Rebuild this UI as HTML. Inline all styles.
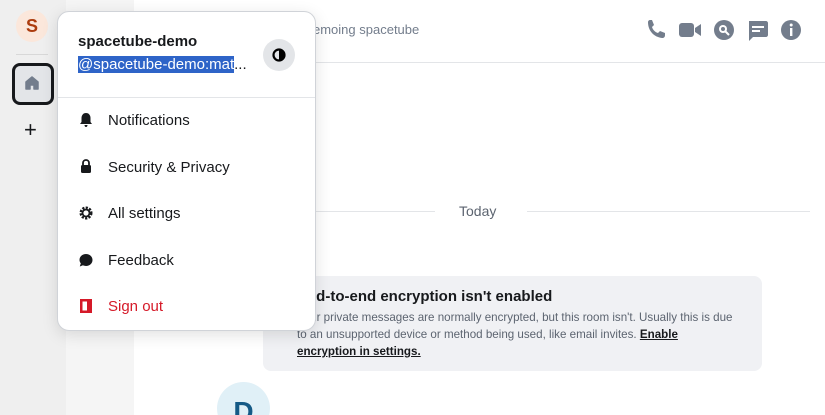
<!DOCTYPE html><html style="overflow:hidden;height:415px"><head><style>
body{margin:0;width:825px;height:415px;overflow:hidden;font-family:"Liberation Sans",sans-serif;background:#fff;position:relative}
.a{position:absolute}
</style></head><body>
<div class="a" style="left:0;top:0;width:66px;height:415px;background:#efefef"></div>
<div class="a" style="left:66px;top:0;width:68px;height:415px;background:#f5f5f5"></div>
<div class="a" style="left:16px;top:10px;width:32px;height:32px;border-radius:50%;background:#fbe7db;color:#ac3c0e;font-weight:bold;font-size:18px;text-align:center;line-height:32px">S</div>
<div class="a" style="left:16px;top:54px;width:32px;height:1px;background:#d8d8d8"></div>
<div class="a" style="left:12px;top:63px;width:36px;height:36px;border:3px solid #17191c;border-radius:8px;background:#e3e5e8"></div>
<svg class="a" style="left:22px;top:73px" width="20" height="20" viewBox="0 0 20 20"><path d="M4 9 L10 4 L16 9 V16 H12 V12 H8 V16 H4Z" fill="#737d8c" stroke="#737d8c" stroke-linejoin="round" stroke-width="1.5"/></svg>
<div class="a" style="left:24px;top:117px;font-size:22px;color:#17191c;line-height:26px">+</div>
<div class="a" style="left:134px;top:62px;width:691px;height:1px;background:#e3e5e8"></div>
<div class="a" style="left:313px;top:22px;font-size:13px;color:#737d8c">emoing spacetube</div>
<svg class="a" style="left:645px;top:19px" width="160" height="24" viewBox="0 0 160 24" fill="#737d8c">
<path d="M3 3 C3 2 4 1 5 1 L7 1 L9 6 L7 8 C8 11 10 13 13 14 L15 12 L20 14 V16 C20 18 19 19 17 19 C9 18 3 12 3 3Z"/>
<rect x="34" y="4" width="15" height="14" rx="3"/><path d="M50 9 L56 5 V17 L50 13Z"/>
<circle cx="79" cy="11" r="10"/><circle cx="78" cy="10" r="4" fill="#fff"/><circle cx="78" cy="10" r="2" fill="#737d8c"/><path d="M80 12 L84 16" stroke="#fff" stroke-width="2"/>
<path d="M104 2 H121 C122 2 123 3 123 4 V16 C123 17 122 18 121 18 H108 L104 22Z"/><rect x="107" y="7" width="12" height="2" fill="#fff"/><rect x="107" y="11" width="8" height="2" fill="#fff"/>
<circle cx="146" cy="11" r="10"/><rect x="145" y="9" width="2.4" height="8" fill="#fff"/><circle cx="146.2" cy="6" r="1.5" fill="#fff"/>
</svg>
<div class="a" style="left:315px;top:211px;width:120px;height:1px;background:#e3e5e8"></div>
<div class="a" style="left:527px;top:211px;width:283px;height:1px;background:#e3e5e8"></div>
<div class="a" style="left:459px;top:203px;font-size:14px;color:#5c6470">Today</div>
<div class="a" style="left:263px;top:276px;width:499px;height:95px;background:#f0f1f4;border-radius:8px"></div>
<div class="a" style="left:297px;top:288px;font-size:15px;font-weight:bold;color:#17191c">End-to-end encryption isn't enabled</div>
<div class="a" style="left:297px;top:309px;width:440px;font-size:11.6px;line-height:17px;color:#5c6470">Your private messages are normally encrypted, but this room isn't. Usually this is due to an unsupported device or method being used, like email invites. <b style="color:#17191c;text-decoration:underline">Enable encryption in settings.</b></div>
<div class="a" style="left:217px;top:382px;width:53px;height:33px;overflow:hidden"><div style="width:53px;height:53px;border-radius:50%;background:#e0f0f7;color:#155a86;font-weight:bold;font-size:28px;text-align:center;line-height:60px">D</div></div>
<div class="a" style="left:57px;top:11px;width:257px;height:318px;background:#fff;border:1px solid #d0d3d8;border-radius:12px;box-shadow:0 4px 16px rgba(0,0,0,.12)">
<div class="a" style="left:20px;top:21px;font-size:15px;font-weight:bold;color:#17191c">spacetube-demo</div>
<div class="a" style="left:20px;top:43px;font-size:15px;line-height:20px;white-space:nowrap"><span style="color:#fff;background:#2e64c8">@spacetube-demo:mat</span><span style="color:#17191c">...</span></div>
<div class="a" style="left:205px;top:27px;width:32px;height:32px;border-radius:50%;background:#e3e5e8"></div>
<svg class="a" style="left:214px;top:36px" width="14" height="14" viewBox="0 0 14 14"><circle cx="7" cy="7" r="5.5" fill="none" stroke="#000" stroke-width="2.2"/><path d="M7 1.5 A5.5 5.5 0 0 1 7 12.5Z" fill="#000"/></svg>
<div class="a" style="left:0;top:85px;width:257px;height:1px;background:#e3e5e8"></div>
<div class="a" style="left:50px;top:99px;font-size:15px;color:#17191c;line-height:20px">Notifications</div>
<div class="a" style="left:50px;top:146px;font-size:15px;color:#17191c;line-height:20px">Security &amp; Privacy</div>
<div class="a" style="left:50px;top:192px;font-size:15px;color:#17191c;line-height:20px">All settings</div>
<div class="a" style="left:50px;top:239px;font-size:15px;color:#17191c;line-height:20px">Feedback</div>
<div class="a" style="left:50px;top:285px;font-size:15px;color:#d51928;line-height:20px">Sign out</div>
<svg class="a" style="left:20px;top:100px" width="16" height="210" viewBox="0 0 16 210" fill="#17191c">
<path d="M8 1 C5 1 3.5 3.5 3.5 6 V10 L2 12 H14 L12.5 10 V6 C12.5 3.5 11 1 8 1Z M6.5 13 H9.5 C9.5 14 9 15 8 15 C7 15 6.5 14 6.5 13Z"/>
<rect x="3" y="53" width="10" height="8" rx="1.5"/><path d="M5 53 V51 C5 47 11 47 11 51 V53" fill="none" stroke="#17191c" stroke-width="1.8"/>
<circle cx="8" cy="101" r="5.3" fill="none" stroke="#17191c" stroke-width="2.4" stroke-dasharray="2.2 1.3"/><circle cx="8" cy="101" r="3.5" fill="none" stroke="#17191c" stroke-width="1.8"/>
<path d="M8 142 C11.7 142 14.5 144.7 14.5 148 C14.5 151.3 11.7 154 8 154 C7 154 6 153.8 5 153.3 L1.8 154.5 L2.8 151.3 C2 150.4 1.5 149.3 1.5 148 C1.5 144.7 4.3 142 8 142Z"/>
<rect x="2" y="187" width="12" height="14" fill="#d51928"/><rect x="4.5" y="189.5" width="4.5" height="9" fill="#fff"/>
</svg>
</div>
</body></html>
